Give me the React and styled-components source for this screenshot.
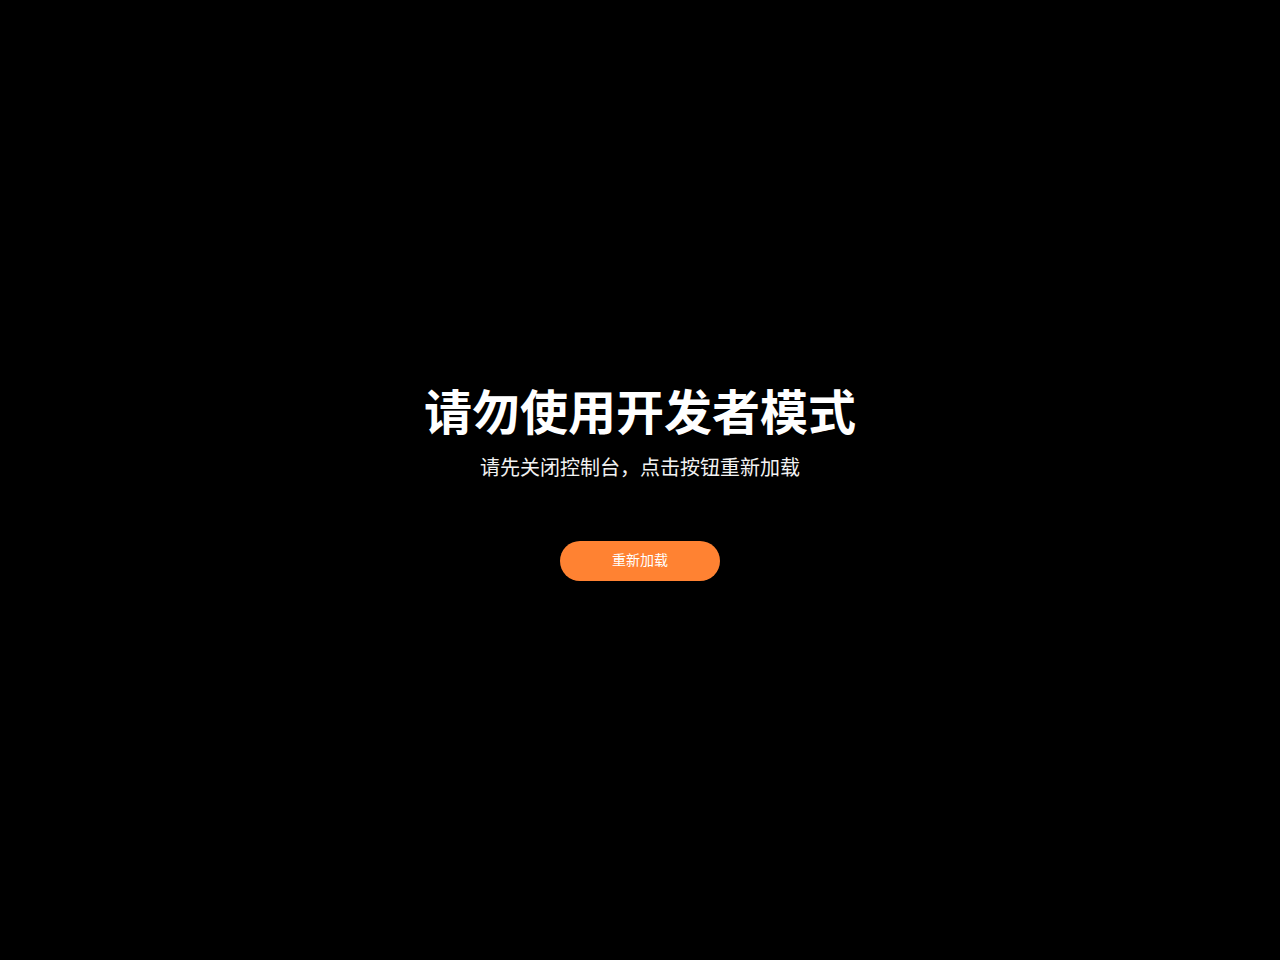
import React from 'react';
import styled, { createGlobalStyle } from 'styled-components';

const GlobalStyle = createGlobalStyle`
  html, body {
    margin: 0;
    padding: 0;
    background: #000;
  }
  body {
    font-family: "Noto Sans CJK SC", "Noto Sans", sans-serif;
  }
`;

const Page = styled.div`
  min-height: 100vh;
  box-sizing: border-box;
  padding-bottom: 2px;
  display: flex;
  flex-direction: column;
  align-items: center;
  justify-content: center;
  background: #000;
  color: #fff;
`;

const Title = styled.h1`
  margin: 0;
  font-size: 48px;
  line-height: 62px;
  font-weight: bold;
`;

const Subtitle = styled.p`
  margin: 12px 0 0;
  font-size: 20px;
  line-height: 30px;
  color: #f2f2f2;
`;

const ReloadButton = styled.button`
  margin-top: 59px;
  width: 160px;
  height: 40px;
  padding: 0 0 3px;
  border: none;
  border-radius: 20px;
  background: #ff8232;
  color: #fff;
  font-family: inherit;
  font-size: 14px;
  cursor: pointer;

  &:hover {
    background: #ff7420;
  }
`;

const App = () => {
  return (
    <Page>
      <GlobalStyle />
      <Title>请勿使用开发者模式</Title>
      <Subtitle>请先关闭控制台，点击按钮重新加载</Subtitle>
      <ReloadButton onClick={() => window.location.reload()}>重新加载</ReloadButton>
    </Page>
  );
};

export default App;
